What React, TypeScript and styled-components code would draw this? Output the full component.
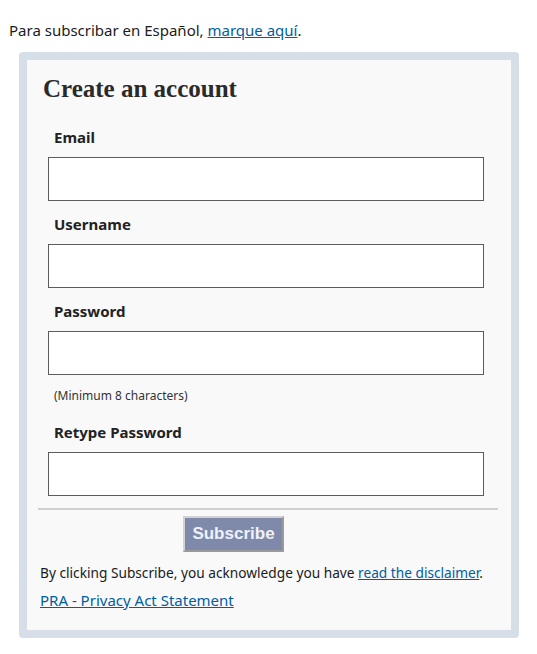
import React from "react";
import styled, { createGlobalStyle } from "styled-components";

const GlobalStyle = createGlobalStyle`
  body {
    margin: 0;
    background: #ffffff;
    font-family: "Noto Sans", "Liberation Sans", sans-serif;
    color: #1b1b1b;
  }
`;

const Page = styled.div`
  padding: 18px 18px 16px 9px;
`;

const Intro = styled.p`
  margin: 0 0 10px 0;
  font-size: 15px;
  line-height: 24px;
`;

const Link = styled.a`
  color: #005ea2;
  text-decoration: underline;
`;

const Card = styled.div`
  box-sizing: border-box;
  margin-left: 10px;
  width: 500px;
  border: 8px solid #d6dfe8;
  border-radius: 4px;
  background: #f9f9f9;
  padding: 14px 13px 19px 11px;
`;

const Title = styled.h2`
  margin: 0 0 22px 5px;
  font-family: "Liberation Serif", "DejaVu Serif", serif;
  font-size: 25px;
  font-weight: bold;
  color: #2a2a2a;
  line-height: 30px;
`;

const Field = styled.div`
  display: flex;
  flex-direction: column;
  padding: 0 0 0 10px;
  margin-bottom: 12px;
`;

const Label = styled.label`
  margin-left: 6px;
  font-size: 15px;
  font-weight: bold;
  line-height: 22px;
  margin-bottom: 9px;
  color: #222;
`;

const Input = styled.input`
  width: 436px;
  height: 44px;
  box-sizing: border-box;
  border: 1px solid #5c5c5c;
  background: #ffffff;
`;

const Hint = styled.span`
  margin: 12px 0 5px 6px;
  font-size: 12px;
  color: #333;
`;

const Rule = styled.hr`
  margin: 2px 0 6px 0;
  border: 0;
  border-top: 2px solid #cfcfcf;
`;

const ButtonRow = styled.div`
  display: flex;
  justify-content: flex-start;
  padding-left: 145px;
`;

const SubscribeButton = styled.button`
  width: 101px;
  height: 36px;
  background: #7f8aab;
  border: 2px solid #c9c9c9;
  border-color: #d2d2d2 #9a9a9a #9a9a9a #d2d2d2;
  color: #eef1f8;
  font-family: "Liberation Sans", Arial, sans-serif;
  font-weight: bold;
  font-size: 17px;
  padding: 0;
`;

const Note = styled.p`
  margin: 10px 0 0 2px;
  font-size: 13.7px;
  line-height: 22px;
`;

const FooterLink = styled(Link)`
  display: inline-block;
  margin: 6px 0 0 2px;
  font-size: 15px;
`;

const fields = [
  { label: "Email", type: "email" },
  { label: "Username", type: "text" },
  { label: "Password", type: "password", hint: "(Minimum 8 characters)" },
  { label: "Retype Password", type: "password" },
];

export default function App() {
  return (
    <Page>
      <GlobalStyle />
      <Intro>
        Para subscribar en Español, <Link href="#">marque aquí</Link>.
      </Intro>
      <Card>
        <Title>Create an account</Title>
        {fields.map((f) => (
          <Field key={f.label}>
            <Label>{f.label}</Label>
            <Input type={f.type} />
            {f.hint && <Hint>{f.hint}</Hint>}
          </Field>
        ))}
        <Rule />
        <ButtonRow>
          <SubscribeButton>Subscribe</SubscribeButton>
        </ButtonRow>
        <Note>
          By clicking Subscribe, you acknowledge you have{" "}
          <Link href="#">read the disclaimer</Link>.
        </Note>
        <FooterLink href="#">PRA - Privacy Act Statement</FooterLink>
      </Card>
    </Page>
  );
}
